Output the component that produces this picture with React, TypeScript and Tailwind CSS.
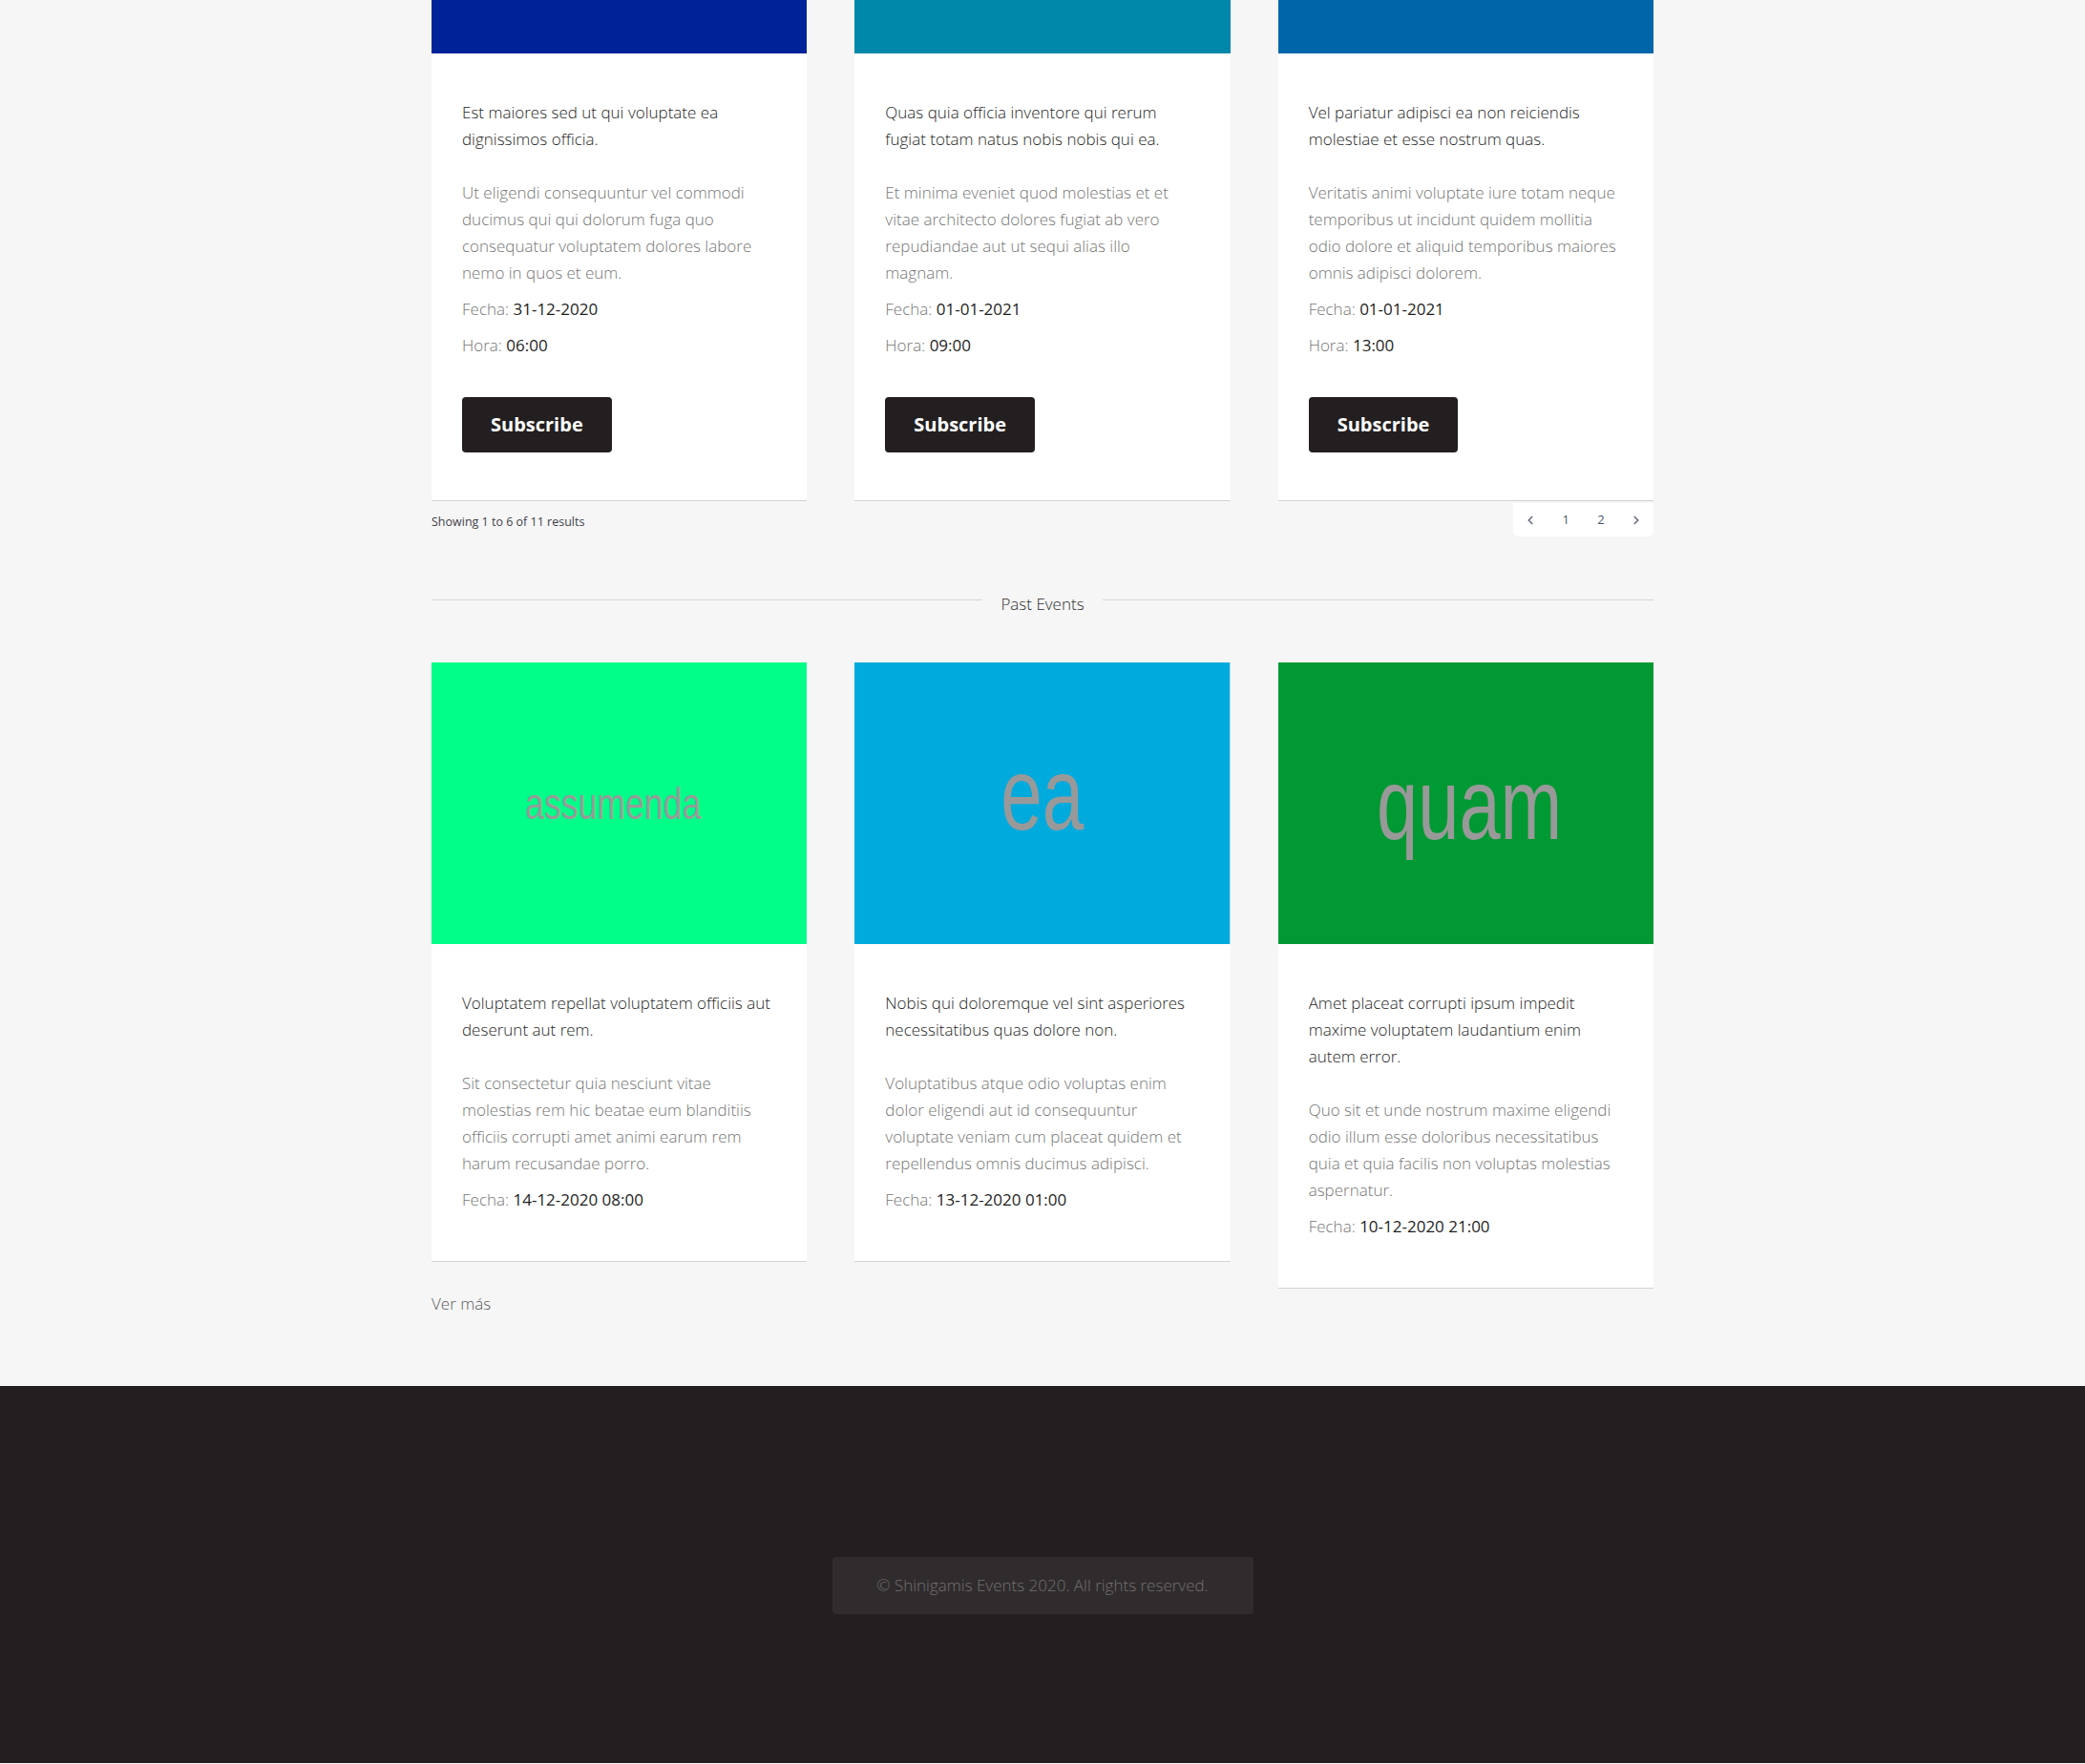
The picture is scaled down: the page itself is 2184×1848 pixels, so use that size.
import React from "react";
import { ChevronLeft, ChevronRight } from "lucide-react";

type Upcoming = { color: string; title: string[]; body: string[]; fecha: string; hora: string };
type Past = {
  color: string;
  word: string;
  wx: number;
  wlen: number;
  wy: number;
  wsize: number;
  title: string[];
  body: string[];
  fecha: string;
};

const upcoming: Upcoming[] = [
  {
    color: "bg-[#002299]",
    title: ["Est maiores sed ut qui voluptate ea", "dignissimos officia."],
    body: [
      "Ut eligendi consequuntur vel commodi",
      "ducimus qui qui dolorum fuga quo",
      "consequatur voluptatem dolores labore",
      "nemo in quos et eum.",
    ],
    fecha: "31-12-2020",
    hora: "06:00",
  },
  {
    color: "bg-[#0088aa]",
    title: ["Quas quia officia inventore qui rerum", "fugiat totam natus nobis nobis qui ea."],
    body: [
      "Et minima eveniet quod molestias et et",
      "vitae architecto dolores fugiat ab vero",
      "repudiandae aut ut sequi alias illo",
      "magnam.",
    ],
    fecha: "01-01-2021",
    hora: "09:00",
  },
  {
    color: "bg-[#0066aa]",
    title: ["Vel pariatur adipisci ea non reiciendis", "molestiae et esse nostrum quas."],
    body: [
      "Veritatis animi voluptate iure totam neque",
      "temporibus ut incidunt quidem mollitia",
      "odio dolore et aliquid temporibus maiores",
      "omnis adipisci dolorem.",
    ],
    fecha: "01-01-2021",
    hora: "13:00",
  },
];

const past: Past[] = [
  {
    color: "#00ff88",
    word: "assumenda",
    wx: 98,
    wlen: 184,
    wy: 164,
    wsize: 46,
    title: ["Voluptatem repellat voluptatem officiis aut", "deserunt aut rem."],
    body: [
      "Sit consectetur quia nesciunt vitae",
      "molestias rem hic beatae eum blanditiis",
      "officiis corrupti amet animi earum rem",
      "harum recusandae porro.",
    ],
    fecha: "14-12-2020 08:00",
  },
  {
    color: "#00aadd",
    word: "ea",
    wx: 153,
    wlen: 87,
    wy: 175,
    wsize: 108,
    title: ["Nobis qui doloremque vel sint asperiores", "necessitatibus quas dolore non."],
    body: [
      "Voluptatibus atque odio voluptas enim",
      "dolor eligendi aut id consequuntur",
      "voluptate veniam cum placeat quidem et",
      "repellendus omnis ducimus adipisci.",
    ],
    fecha: "13-12-2020 01:00",
  },
  {
    color: "#009933",
    word: "quam",
    wx: 103,
    wlen: 194,
    wy: 185,
    wsize: 106,
    title: ["Amet placeat corrupti ipsum impedit", "maxime voluptatem laudantium enim", "autem error."],
    body: [
      "Quo sit et unde nostrum maxime eligendi",
      "odio illum esse doloribus necessitatibus",
      "quia et quia facilis non voluptas molestias",
      "aspernatur.",
    ],
    fecha: "10-12-2020 21:00",
  },
];

function Lines({ lines }: { lines: string[] }) {
  return (
    <>
      {lines.map((l, i) => (
        <React.Fragment key={i}>
          {i > 0 && <br />}
          {l}
        </React.Fragment>
      ))}
    </>
  );
}

function CardBody({
  title,
  body,
  children,
}: {
  title: string[];
  body: string[];
  children: React.ReactNode;
}) {
  return (
    <div className="px-8 pt-12 pb-[50px] text-[17px] leading-7 font-light">
      <p className="text-[#262626] whitespace-nowrap">
        <Lines lines={title} />
      </p>
      <p className="mt-7 text-[#767676] whitespace-nowrap">
        <Lines lines={body} />
      </p>
      {children}
    </div>
  );
}

function Meta({ label, value }: { label: string; value: string }) {
  return (
    <p className="mt-[10px] text-[#767676]">
      {label}: <span className="font-normal text-[#1e1e1e]">{value}</span>
    </p>
  );
}

export default function App() {
  return (
    <div className="min-h-screen bg-[#f6f6f6] font-['Open_Sans','Noto_Sans',sans-serif]">
      <main className="mx-auto w-[1280px] pb-[72px]">
        <div className="grid grid-cols-3 items-start gap-x-[50px]">
          {upcoming.map((c, i) => (
            <div key={i} className="bg-white border-b border-[#d2d2d2]">
              <div className={`h-14 ${c.color}`} />
              <CardBody title={c.title} body={c.body}>
                <Meta label="Fecha" value={c.fecha} />
                <Meta label="Hora" value={c.hora} />
                <button className="mt-10 rounded-[4px] bg-[#231f20] px-[30px] py-[15px] text-[20px] font-bold leading-7 text-white">
                  Subscribe
                </button>
              </CardBody>
            </div>
          ))}
        </div>

        <div className="mt-[2px] flex items-start justify-between">
          <p className="mt-[10px] text-[12.5px] leading-5 text-[#3f3f4a]">
            Showing 1 to 6 of 11 results
          </p>
          <nav className="flex h-[35px] w-[147px] items-center rounded-b-md bg-white text-[13px] text-[#4b5563]">
            <span className="flex flex-1 justify-center text-[#6b7280]">
              <ChevronLeft size={14} strokeWidth={3} />
            </span>
            <span className="flex-1 text-center">1</span>
            <span className="flex-1 text-center">2</span>
            <span className="flex flex-1 justify-center text-[#6b7280]">
              <ChevronRight size={14} strokeWidth={3} />
            </span>
          </nav>
        </div>

        <div className="mt-[57px] flex items-center gap-[19px]">
          <div className="mb-[9px] h-px flex-1 bg-[#d6d6d6]" />
          <span className="text-[17px] font-light leading-7 text-[#2e2e2e]">Past Events</span>
          <div className="mb-[9px] h-px flex-1 bg-[#d6d6d6]" />
        </div>

        <div className="mt-[47px] grid grid-cols-3 items-start gap-x-[50px]">
          {past.map((c, i) => (
            <div key={i} className="bg-white border-b border-[#d2d2d2]">
              <svg
                viewBox="0 0 393 295"
                preserveAspectRatio="none"
                className="block h-[295px] w-full"
              >
                <rect width="393" height="295" fill={c.color} />
                <text
                  x={c.wx}
                  y={c.wy}
                  fontSize={c.wsize}
                  textLength={c.wlen}
                  lengthAdjust="spacingAndGlyphs"
                  fill="#999999"
                  fontFamily="'Liberation Sans', Arial, sans-serif"
                >
                  {c.word}
                </text>
              </svg>
              <CardBody title={c.title} body={c.body}>
                <Meta label="Fecha" value={c.fecha} />
              </CardBody>
            </div>
          ))}
        </div>

        <a className="mt-[2px] block text-[17px] font-light leading-7 text-[#5a5a5a]">Ver más</a>
      </main>

      <footer className="bg-[#231f20] pt-[179px] pb-[156px]">
        <div className="mx-auto flex h-[60px] w-[441px] items-center justify-center rounded-[4px] bg-[#302c2d] text-[17px] font-light text-[#737071]">
          © Shinigamis Events 2020. All rights reserved.
        </div>
      </footer>
    </div>
  );
}
